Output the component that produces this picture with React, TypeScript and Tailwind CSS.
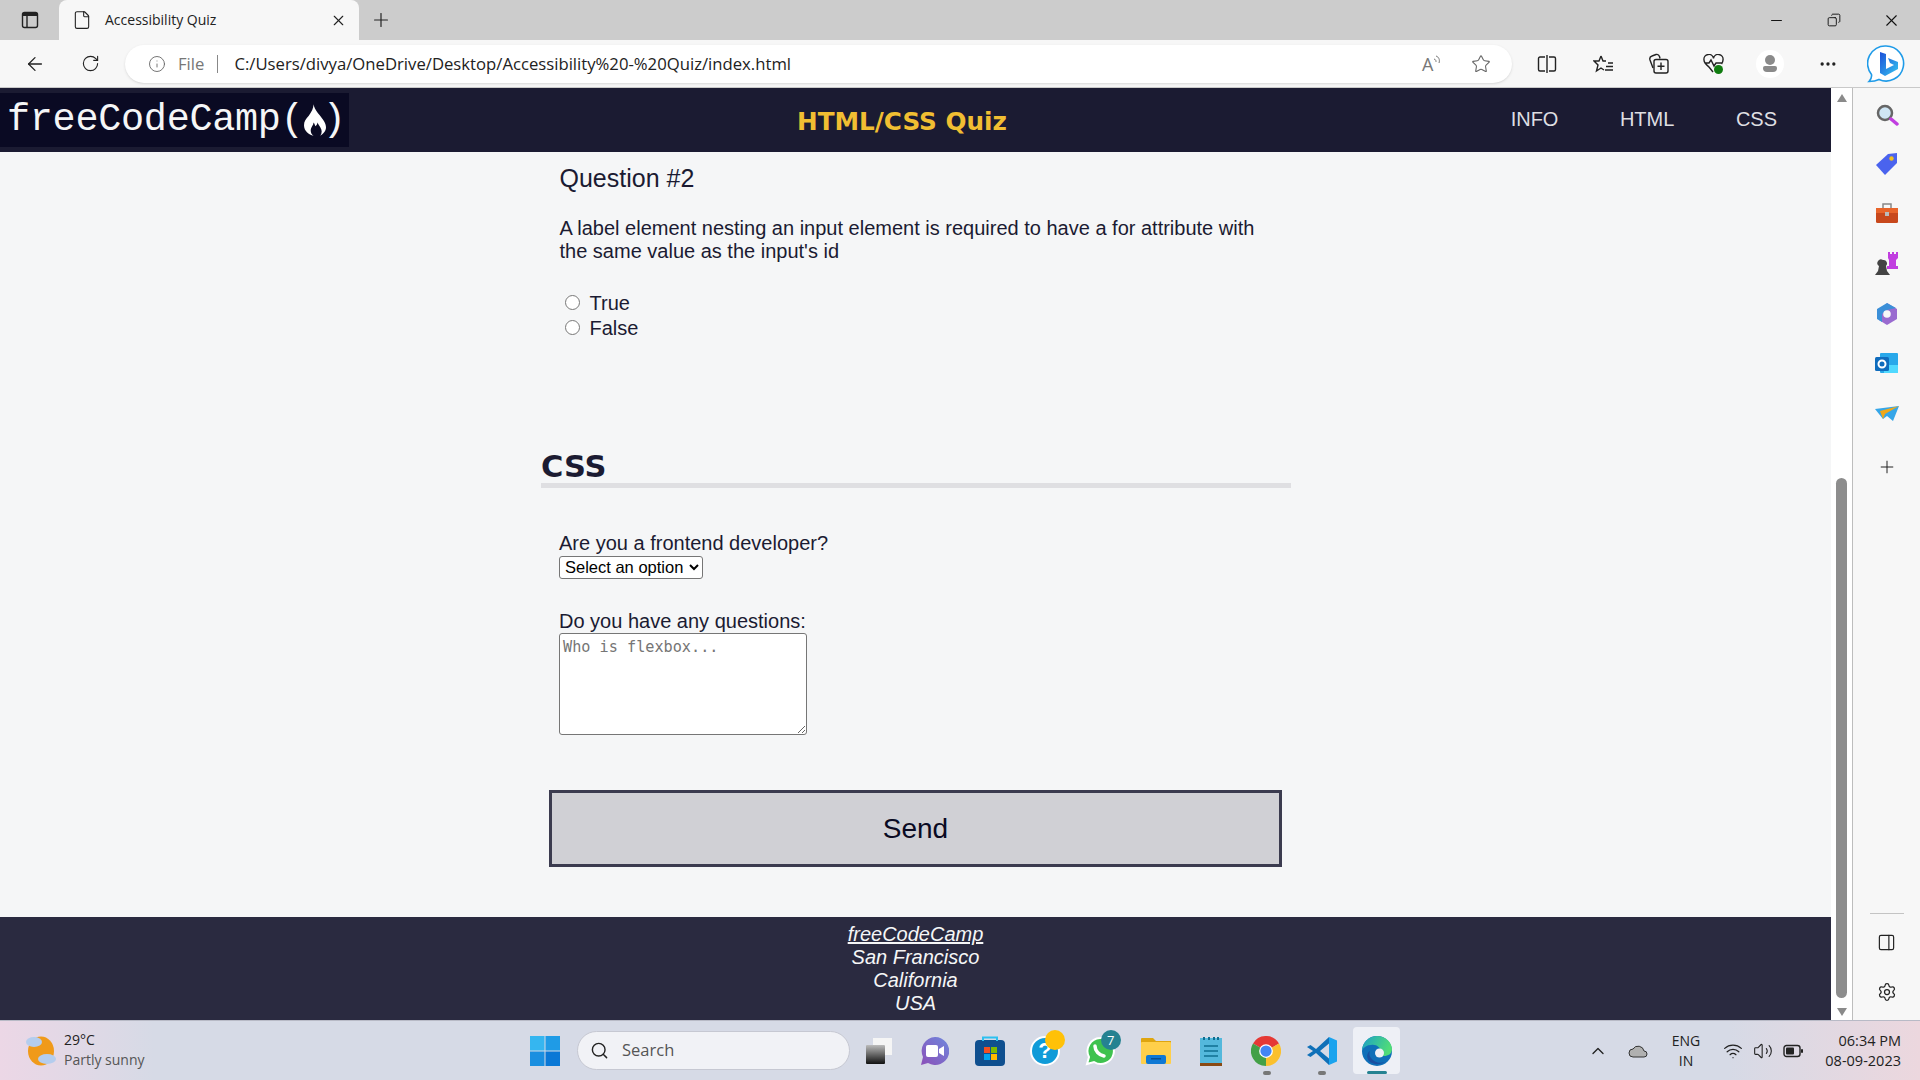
import React from 'react';
import { ArrowLeft, RotateCw, Info, Star, Plus, X, Minus, Ellipsis, Search, Settings, PanelRight, ChevronUp, Wifi, Volume2, File, Copy } from 'lucide-react';

const segoe = "font-['Open_Sans','Liberation_Sans',sans-serif]";

const Flame = () => (
  <svg width="22" height="32" viewBox="0 0 23 33">
    <path fill="#fff" d="M10 0c1 5 3 7 6 11 4 5 7 9 7 13 0 4-3 7-6 9 2-3 2-6 0-9-1-2-2-3-3-5 0 2-1 3-2 4-1-2-1-3-2-4 0 3-3 5-3 8 0 3 1 5 3 6-5-1-10-5-10-11 0-4 2-7 5-10 3-4 5-8 5-12z" />
  </svg>
);

const SideIcons = () => (
  <div className="flex flex-col items-center">
    <div className="h-[48px] flex items-center">
      <svg width="24" height="24" viewBox="0 0 24 24"><circle cx="10" cy="10" r="7" fill="#cfe6f5" stroke="#666" strokeWidth="2.500" /><path d="M16 16l6 5" stroke="#c13ee0" strokeWidth="3.500" strokeLinecap="round" /></svg>
    </div>
    <div className="h-[50px] flex items-center">
      <svg width="24" height="24" viewBox="0 0 24 24"><path fill="#4a63ee" d="M13 2l9-1v10L10 23 1 13z" /><circle cx="16.500" cy="6.500" r="2.200" fill="#f0c020" /></svg>
    </div>
    <div className="h-[50px] flex items-center">
      <svg width="24" height="24" viewBox="0 0 24 24"><path d="M8 6V2h8v4" fill="none" stroke="#888" strokeWidth="1.500" /><rect x="1" y="6" width="22" height="15" rx="1.500" fill="#c8481c" /><rect x="1" y="6" width="22" height="5" fill="#e8642a" /><rect x="10" y="10" width="4" height="4" fill="#bbb" /></svg>
    </div>
    <div className="h-[50px] flex items-center">
      <svg width="24" height="24" viewBox="0 0 24 24"><path fill="#444" d="M8 8a3.500 3.500 0 0 1 3 6l1 5 3 4H0l3-4 1-5a3.500 3.500 0 0 1 4-6z" /><path fill="#c13ee0" d="M13 0h2v2h2V0h2v2h2V0h2v6l-2 2v6h2v3H12v-3h2V8l-1-2z" /></svg>
    </div>
    <div className="h-[50px] flex items-center">
      <svg width="24" height="24" viewBox="0 0 24 24"><path fill="#9a6bd0" d="M12 1l10 6v10l-10 6-8-5z" /><path fill="#3b8fd8" d="M2 7l10-6 9 5-9 2-5 4v8l-5-3z" /><circle cx="12" cy="12" r="3.800" fill="#f7f7f7" /></svg>
    </div>
    <div className="h-[50px] flex items-center">
      <svg width="24" height="24" viewBox="0 0 24 24"><rect x="5" y="1" width="18" height="20" rx="1" fill="#28a8ea" /><path fill="#50d9ff" d="M9 13h14v8H9z" /><rect x="0" y="5" width="14" height="14" rx="1.500" fill="#0f6cbd" /><circle cx="7" cy="12" r="3.500" fill="none" stroke="#fff" strokeWidth="2" /></svg>
    </div>
    <div className="h-[50px] flex items-center">
      <svg width="24" height="24" viewBox="0 0 24 24"><path fill="#35a6e8" d="M0 7l24-3-6 15-6-5-4 3z" /><path fill="#f0a818" d="M5 9l19-5-14 8-2 5z" /></svg>
    </div>
    <div className="h-[56px] flex items-center"><Plus size={20} strokeWidth={1.200} className="text-[#222]" /></div>
  </div>
);

const Bing = () => (
  <svg width="38" height="38" viewBox="0 0 38 38">
    <defs>
      <linearGradient id="bing-b" x1="0" y1="0" x2="1" y2="1"><stop offset="0" stopColor="#1b4fd8" /><stop offset="1" stopColor="#37c6f0" /></linearGradient>
    </defs>
    <path fill="#fff" stroke="#1f9be8" strokeWidth="1.600" d="M19 1a17.500 17.500 0 1 1-7 33.500c-3 1.500-6 2-10 2 2-2 3-4 2.500-7A17.500 17.500 0 0 1 19 1z" />
    <path fill="url(#bing-b)" d="M13 7l6 2v15l8-4-4-2-2-5 10 4v7l-13 7-5-3z" />
  </svg>
);

const ToolCell = ({ w, children }: { w: string; children: React.ReactNode }) => (
  <div className={`${w} shrink-0 flex justify-center items-center relative`}>{children}</div>
);

const App = () => {
  return (
    <div className={`w-[1920px] h-[1080px] flex flex-col overflow-hidden bg-[#f7f7f8] ${segoe}`}>
      {/* tab strip */}
      <div className="h-10 shrink-0 bg-[#cccccc] flex items-end">
        <div className="w-[59px] h-10 flex items-center justify-center">
          <svg width="20" height="20" viewBox="0 0 20 20" fill="none" stroke="#222" strokeWidth="1.400"><rect x="2.500" y="2.500" width="15" height="15" rx="2" /><path d="M7 3v14" /><path d="M3 4.500h14" strokeWidth="3" /></svg>
        </div>
        <div className="w-[300px] h-10 bg-[#f7f7f7] rounded-t-lg flex items-center pl-[13px] pr-[12px]">
          <File size={20} strokeWidth={1.300} className="text-[#222]" />
          <span className="ml-[13px] pb-[2px] text-[14px] text-[#222] flex-1">Accessibility Quiz</span>
          <X size={17} strokeWidth={1.600} className="text-[#222]" />
        </div>
        <div className="w-[44px] h-10 flex items-center justify-center"><Plus size={22} strokeWidth={1.300} className="text-[#222]" /></div>
        <div className="flex-1" />
        <div className="w-[57px] h-10 flex items-center justify-center"><Minus size={17} strokeWidth={1.400} className="text-[#111]" /></div>
        <div className="w-[57px] h-10 flex items-center justify-center"><Copy size={14} strokeWidth={1.600} className="text-[#111] -scale-x-100" /></div>
        <div className="w-[58px] h-10 flex items-center justify-center"><X size={19} strokeWidth={1.400} className="text-[#111]" /></div>
      </div>

      {/* address bar */}
      <div className="h-[48px] shrink-0 bg-[#f7f7f7] border-b border-[#c9c9c9] flex items-center">
        <div className="w-[70px] flex justify-center"><ArrowLeft size={22} strokeWidth={1.400} className="text-[#222]" /></div>
        <div className="w-[40px] flex justify-center"><RotateCw size={19} strokeWidth={1.400} className="text-[#222]" /></div>
        <div className="w-[1387px] h-[38px] ml-[15px] bg-white rounded-full flex items-center pl-[23px] pr-[21px] shadow-sm">
          <Info size={18} strokeWidth={1.200} className="text-[#666]" />
          <span className="ml-[12px] text-[16.700px] text-[#777]">File</span>
          <span className="ml-[13px] mr-[16px] w-px h-[18px] bg-[#888]" />
          <span className="text-[16.700px] text-[#222] flex-1">C:/Users/divya/OneDrive/Desktop/Accessibility%20-%20Quiz/index.html</span>
          <span className="flex items-start mr-[29px] w-[20px] text-[#777]">
            <span className="text-[18px] leading-none">A</span>
            <svg width="8" height="12" viewBox="0 0 8 12" fill="none" stroke="#777" strokeWidth="1"><path d="M1 4c2 .5 2 2 2 3M3 1c3 1 4 4 3 7" /></svg>
          </span>
          <Star size={20} strokeWidth={1.300} className="text-[#666]" />
        </div>
        <div className="flex-1 flex items-center pl-[7px]">
          <ToolCell w="w-[56px]">
            <svg width="20" height="20" viewBox="0 0 20 20" fill="none" stroke="#222" strokeWidth="1.400"><path d="M8 3H3a1.500 1.500 0 0 0-1.500 1.500v11A1.500 1.500 0 0 0 3 17h5M12 3h5a1.500 1.500 0 0 1 1.500 1.500v11A1.500 1.500 0 0 1 17 17h-5M10 1v18" /></svg>
          </ToolCell>
          <ToolCell w="w-[56px]">
            <svg width="21" height="20" viewBox="0 0 21 20" fill="none" stroke="#222" strokeWidth="1.400"><path d="M8 2l2 5h3M8 2L6 7H1l4 4-1.500 6L8 14l3 2M15 9h5M13 12.500h7M12 16h8" /></svg>
          </ToolCell>
          <ToolCell w="w-[55px]">
            <svg width="21" height="21" viewBox="0 0 21 21" fill="none" stroke="#222" strokeWidth="1.400"><path d="M5 15L2 7c-.6-2 .4-3.500 2-4l4-1.500c1.500-.4 3 .5 3.500 2l.5 2" /><rect x="6" y="6.500" width="14" height="13.500" rx="2" /><path d="M13 9.500v7.500M9.500 13.200h7" /></svg>
          </ToolCell>
          <ToolCell w="w-[55px]">
            <svg width="21" height="20" viewBox="0 0 21 20" fill="none" stroke="#222" strokeWidth="1.400"><path d="M6 13C3 10.500 1 9 1 6a4.500 4.500 0 0 1 9.500-1.500A4.500 4.500 0 0 1 20 6c0 1.500-.5 2.500-1.500 4M1.500 9H6l2-3 3 6 2-3h6M6 13l4 5" /></svg>
            <span className="absolute left-[28px] top-[11px] w-[9px] h-[9px] rounded-full bg-[#107c10]" />
          </ToolCell>
          <ToolCell w="w-[58px]">
            <div className="w-[28px] h-[28px] rounded-full bg-white flex flex-col items-center justify-center">
              <span className="w-[10px] h-[10px] rounded-full bg-[#8a8a8a]" />
              <span className="w-[14px] h-[6px] rounded-t rounded-b-lg bg-[#8a8a8a] mt-px" />
            </div>
          </ToolCell>
          <ToolCell w="w-[58px]"><Ellipsis size={20} className="text-[#222]" /></ToolCell>
          <ToolCell w="w-[58px]"><Bing /></ToolCell>
        </div>
      </div>

      {/* middle */}
      <div className="flex-1 min-h-0 flex">
        <div className="flex-1 min-w-0 flex flex-col">
          <header className="h-[64px] shrink-0 bg-[#1b1b32] flex items-center">
            <div className="w-[349px] h-[54px] bg-[#0a0a23] flex items-center pl-[7px]">
              <span className="font-['Liberation_Mono',monospace] text-[38.500px] leading-none tracking-[-0.300px] text-[#f5f6f7]">freeCodeCamp</span>
              <span className="font-['Liberation_Mono',monospace] text-[38.500px] leading-none text-[#f5f6f7]">(</span>
              <span className="flex"><Flame /></span>
              <span className="font-['Liberation_Mono',monospace] text-[38.500px] leading-none text-[#f5f6f7] -ml-[3px]">)</span>
            </div>
            <h1 className="font-['DejaVu_Sans',sans-serif] font-bold text-[24.700px] text-[#f1be32] ml-[448px] mt-[3px]">HTML/CSS Quiz</h1>
            <nav className="ml-auto -mt-[2px] flex font-['Liberation_Sans',sans-serif] text-[20px] text-[#dfdfe2] gap-[61.500px] pr-[54px]">
              <span>INFO</span><span>HTML</span><span>CSS</span>
            </nav>
          </header>

          <main className="flex-1 min-h-0 bg-[#f5f6f7] font-['Liberation_Sans',sans-serif] text-[#1b1b32] flex flex-col">
            <div className="flex-1 w-[750px] ml-[541px]">
              <div className="pl-[18.500px] pt-[12px]">
                <h3 className="text-[25px] leading-[28px]">Question #2</h3>
                <p className="text-[20px] leading-[23px] mt-[25px] w-[720px]">A label element nesting an input element is required to have a for attribute with the same value as the input's id</p>
                <div className="mt-[28px] pl-[5px] text-[20px] leading-[25px]">
                  <label className="flex items-center gap-[10px]"><input type="radio" name="q" className="w-[15px] h-[15px] m-0 -translate-y-px" />True</label>
                  <label className="flex items-center gap-[10px]"><input type="radio" name="q" className="w-[15px] h-[15px] m-0 -translate-y-px" />False</label>
                </div>
              </div>
              <h2 className="font-['DejaVu_Sans',sans-serif] font-bold text-[30.500px] leading-[47px] mt-[102px] border-b-[5px] border-[#dfdfe2] h-[45px]">CSS</h2>
              <div className="pl-[18px] mt-[44px]">
                <div className="text-[20px] leading-[23px] pb-px">Are you a frontend developer?</div>
                <select className="block w-[144px] h-[23px] border border-[#767676] rounded-[3px] bg-white text-black text-[16.500px] leading-none pl-[1px] pb-[2px]">
                  <option>Select an option</option>
                </select>
                <div className="text-[20px] leading-[23px] mt-[31px]">Do you have any questions:</div>
                <textarea readOnly placeholder="Who is flexbox..." className="block w-[248px] h-[102px] border border-[#767676] rounded-[3px] bg-white px-[3px] py-[4px] font-['DejaVu_Sans_Mono',monospace] text-[15.200px] leading-[19px] placeholder:text-[#757575]" />
              </div>
              <button className="block w-[733px] h-[77px] ml-[8px] mt-[55px] bg-[#d0d0d5] border-[3px] border-[#3b3b4f] text-[#0a0a23] text-[28px]">Send</button>
            </div>
            <footer className="h-[103px] shrink-0 bg-[#2a2a40] text-[#f5f6f7] italic text-[20px] leading-[23px] text-center pt-[6px]">
              <div className="underline">freeCodeCamp</div>
              <div>San Francisco</div>
              <div>California</div>
              <div>USA</div>
            </footer>
          </main>
        </div>

        {/* page scrollbar */}
        <div className="w-[21px] shrink-0 bg-white flex flex-col items-center">
          <div className="mt-[6px] w-0 h-0 border-l-[5px] border-r-[5px] border-b-[8px] border-l-transparent border-r-transparent border-b-[#8a8a8a]" />
          <div className="w-[11px] h-[520px] mt-[376px] rounded-full bg-[#8d8d8d]" />
          <div className="mt-auto mb-[4px] w-0 h-0 border-l-[5px] border-r-[5px] border-t-[8px] border-l-transparent border-r-transparent border-t-[#8a8a8a]" />
        </div>

        {/* edge sidebar */}
        <div className="w-[68px] shrink-0 bg-[#f7f7f7] border-l border-[#bdbdbd] flex flex-col items-center pt-[3px] pb-[3px]">
          <SideIcons />
          <div className="mt-auto mb-[3px] w-[34px] border-t border-[#c4c4c4]" />
          <div className="h-[50px] flex items-center"><PanelRight size={19} strokeWidth={1.500} className="text-[#222]" /></div>
          <div className="h-[50px] flex items-center"><Settings size={20} strokeWidth={1.500} className="text-[#222]" /></div>
        </div>
      </div>

      {/* taskbar */}
      <div className="h-[60px] shrink-0 border-t border-[#b8bac6] bg-[linear-gradient(90deg,#ecd7e6_0%,#d6dae6_8%,#d6dae6_90%,#ecd7de_100%)] flex items-center">
        <div className="flex items-center pl-[25px] w-[530px] shrink-0">
          <svg width="31" height="31" viewBox="0 0 31 31"><ellipse cx="16" cy="16" rx="13" ry="14.500" fill="#f09a1a" /><ellipse cx="9" cy="7" rx="8" ry="5" fill="#b4cdee" /><ellipse cx="22" cy="24" rx="9" ry="5" fill="#b4cdee" /></svg>
          <div className="ml-[8px] text-[14px] leading-[20px] pb-[2px]">
            <div className="text-[#222]">29°C</div>
            <div className="text-[#555]">Partly sunny</div>
          </div>
        </div>
        <svg width="30" height="30" viewBox="0 0 30 30" className="shrink-0">
          <rect width="14.500" height="14.500" fill="#35b6f0" /><rect x="15.500" width="14.500" height="14.500" fill="#1f9be6" />
          <rect y="15.500" width="14.500" height="14.500" fill="#1a8fe0" /><rect x="15.500" y="15.500" width="14.500" height="14.500" fill="#0a78d6" />
        </svg>
        <div className="w-[273px] h-[39px] ml-[17px] shrink-0 rounded-full bg-[#f1f2f6] border border-[#c6c8d2] flex items-center pl-[12px]">
          <Search size={19} strokeWidth={1.800} className="text-[#222]" />
          <span className="ml-[13px] text-[16.500px] text-[#555]">Search</span>
        </div>
        <div className="ml-[1.500px] flex items-center">
          <ToolCell w="w-[55.300px]">
            <svg width="28" height="28" viewBox="0 0 28 28"><defs><linearGradient id="tv" x1="0" y1="0" x2="0" y2="1"><stop offset="0" stopColor="#bbb" /><stop offset="1" stopColor="#111" /></linearGradient></defs><rect x="8" y="1" width="19" height="17" fill="#f5f5f5" /><rect x="1" y="8" width="19" height="19" rx="1" fill="url(#tv)" /></svg>
          </ToolCell>
          <ToolCell w="w-[55.300px]">
            <svg width="30" height="30" viewBox="0 0 30 30"><defs><linearGradient id="meet" x1="0" y1="1" x2="1" y2="0"><stop offset="0" stopColor="#8b4fb8" /><stop offset="1" stopColor="#6f88dd" /></linearGradient></defs><path fill="url(#meet)" d="M16 1a14 14 0 1 1-7 26l-7 2 2-8A14 14 0 0 1 16 1z" /><rect x="7" y="9" width="12" height="12" rx="2" fill="#fff" /><path fill="#fff" d="M20 13l5-3v10l-5-3z" /></svg>
          </ToolCell>
          <ToolCell w="w-[55.300px]">
            <svg width="30" height="30" viewBox="0 0 30 30"><rect y="4" width="30" height="26" rx="4" fill="#0f4f8f" /><path d="M8 5V1.500h14V5" stroke="#2cc0f0" fill="none" strokeWidth="2" /><rect x="9" y="11" width="6" height="6" fill="#f25022" /><rect x="16" y="11" width="6" height="6" fill="#7fba00" /><rect x="9" y="18" width="6" height="6" fill="#00a4ef" /><rect x="16" y="18" width="6" height="6" fill="#ffb900" /></svg>
          </ToolCell>
          <ToolCell w="w-[55.300px]">
            <div className="w-[30px] h-[30px] rounded-full bg-[#109bd8] border-2 border-white text-white font-bold text-[22px] leading-[26px] text-center font-['Liberation_Sans',sans-serif]">?</div>
            <span className="absolute left-[28px] -top-[6px] w-[20px] h-[20px] rounded-full bg-[#ffc107]" />
          </ToolCell>
          <ToolCell w="w-[55.300px]">
            <svg width="30" height="30" viewBox="0 0 30 30"><path fill="#3ec24f" stroke="#fff" strokeWidth="2" d="M15 2a13 13 0 1 1-6 24l-7 2 2-7A13 13 0 0 1 15 2z" /><path fill="none" stroke="#fff" strokeWidth="3.500" strokeLinecap="round" d="M10 10c0 5 4 9 9 10" /></svg>
            <span className="absolute left-[28px] -top-[6px] w-[20px] h-[20px] rounded-full bg-[#258291] text-white text-[13px] leading-[20px] text-center">7</span>
          </ToolCell>
          <ToolCell w="w-[55.300px]">
            <svg width="30" height="27" viewBox="0 0 30 27"><path fill="#dfa50f" d="M0 2a1 1 0 0 1 1-1h11l3 3h15v6H0z" /><rect y="5" width="30" height="22" rx="1" fill="#ffcf4a" /><rect x="5" y="18" width="20" height="9" rx="2" fill="#0f78d4" /><rect x="10" y="21" width="10" height="1.500" fill="#0a4f90" /></svg>
          </ToolCell>
          <ToolCell w="w-[55.300px]">
            <svg width="22" height="30" viewBox="0 0 22 30"><rect y="2" width="22" height="25" fill="#54b8dc" /><path d="M4 1v3M9 1v3M14 1v3M18 1v3" stroke="#0f6f91" strokeWidth="2" /><path d="M4 10h14M4 15h14M4 20h14" stroke="#0f6f91" strokeWidth="1.500" /><rect y="27" width="22" height="3" fill="#8a4a14" /></svg>
          </ToolCell>
          <ToolCell w="w-[55.300px]">
            <svg width="30" height="30" viewBox="0 0 48 48"><path fill="#e53935" d="M24 24L3.200 12A24 24 0 0 1 44.800 12z" /><path fill="#fbc02d" d="M24 24L44.800 12A24 24 0 0 1 24 48z" /><path fill="#43a047" d="M24 24L24 48A24 24 0 0 1 3.200 12z" /><circle cx="24" cy="24" r="11" fill="#fff" /><circle cx="24" cy="24" r="9" fill="#4285f4" /></svg>
            <span className="absolute left-[24px] -bottom-[9px] w-[8px] h-[4px] rounded-full bg-[#777]" />
          </ToolCell>
          <ToolCell w="w-[55.300px]">
            <svg width="30" height="30" viewBox="0 0 30 30"><path fill="#1aa3ee" d="M22 1l8 3.500v21L22 29z" /><path fill="#0f70b8" d="M22 1L9 13 3.500 9 0 11l6 4-6 4 3.500 2L9 17l13 12v-6.500L13 15l9-7.500z" /></svg>
            <span className="absolute left-[24px] -bottom-[9px] w-[8px] h-[4px] rounded-full bg-[#777]" />
          </ToolCell>
          <ToolCell w="w-[55.300px]">
            <div className="w-[47px] h-[47px] rounded bg-[#eef0f6] flex items-center justify-center relative">
              <svg width="30" height="30" viewBox="0 0 30 30"><defs><linearGradient id="edge" x1="0" y1="0" x2="1" y2="0.300"><stop offset="0" stopColor="#1aa0c8" /><stop offset="1" stopColor="#50dc78" /></linearGradient></defs><circle cx="15" cy="15" r="15" fill="#0f6fb8" /><path fill="url(#edge)" d="M0 14C1 5 8 0 15 0c9 0 15 7 15 13 0 5-4 7-8 7-3 0-4-1-3-3 0-6-5-9-10-8-4 0-7 2-9 5z" /><circle cx="17.500" cy="17" r="4.500" fill="#eef0f6" /><path fill="#1a4fa0" d="M9 22c3 4 8 6 14 4-5 3-12 3-16-1-3-4-2-8 1-10-1 2-1 5 1 7z" /></svg>
              <span className="absolute left-[13.500px] bottom-[0px] w-[20px] h-[3px] rounded-full bg-[#258291]" />
            </div>
          </ToolCell>
        </div>
        <div className="flex-1" />
        <div className="flex items-center pr-[19px]">
          <ToolCell w="w-[40px]"><ChevronUp size={20} strokeWidth={1.600} className="text-[#222]" /></ToolCell>
          <ToolCell w="w-[40px]">
            <svg width="20" height="14" viewBox="0 0 20 14"><path d="M5 13a4 4 0 0 1 0-8 6 6 0 0 1 11 2 3 3 0 0 1 0 6z" fill="#b0b0b0" stroke="#333" strokeWidth="1" /></svg>
          </ToolCell>
          <div className="w-[56px] text-[14px] leading-[20px] text-center text-[#222]">ENG<br />IN</div>
          <ToolCell w="w-[38px]"><Wifi size={20} strokeWidth={1.500} className="text-[#222]" /></ToolCell>
          <ToolCell w="w-[22px]"><Volume2 size={20} strokeWidth={1.300} className="text-[#222]" /></ToolCell>
          <ToolCell w="w-[38px]">
            <svg width="20" height="14" viewBox="0 0 20 14"><rect x="1" y="1.500" width="16" height="11" rx="2.500" fill="none" stroke="#222" strokeWidth="1.400" /><rect x="3" y="3.500" width="8" height="7" rx="1" fill="#222" /><rect x="18" y="5" width="2" height="4" rx="1" fill="#222" /></svg>
          </ToolCell>
          <div className="w-[89px] text-[14.500px] leading-[20px] text-right text-[#222]">06:34 PM<br />08-09-2023</div>
        </div>
      </div>
    </div>
  );
};

export default App;
